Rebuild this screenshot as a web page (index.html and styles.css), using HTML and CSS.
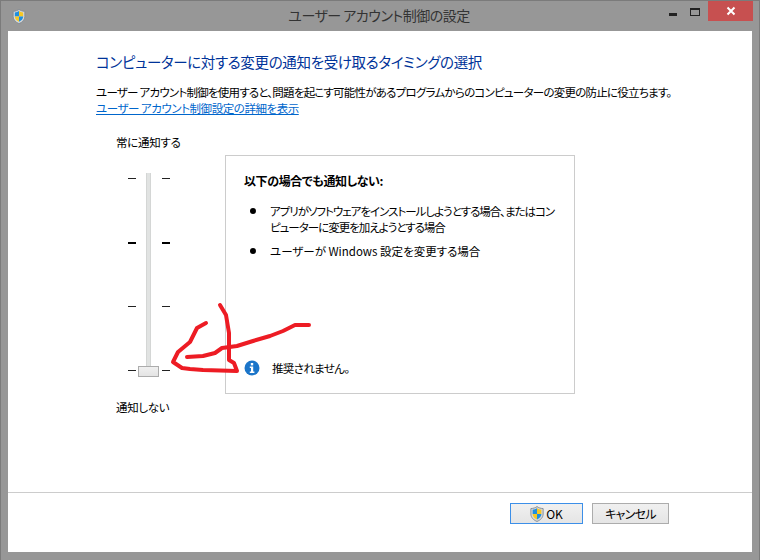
FILE: index.html
```html
<!DOCTYPE html>
<html lang="ja">
<head>
    <meta charset="UTF-8">
    <title>ユーザー アカウント制御の設定</title>
    <link rel="stylesheet" href="styles.css">
</head>
<body>
    <svg class="defs" width="0" height="0">
        <symbol id="shield" viewBox="0 0 16 18">
            <path d="M8 .5C6 2 4 2.6 1 2.8V9c0 4 3 7 7 8.5 4-1.500 7-4.500 7-8.500V2.800C12 2.600 10 2 8 .5z" fill="#d8d8d8" stroke="#7d8790"/>
            <path d="M8 2.500C6.500 3.500 5 4 3 4.200V9h5z" fill="#1f8fe0"/>
            <path d="M8 2.500V9h5V4.200C11 4 9.500 3.500 8 2.500z" fill="#f7c823"/>
            <path d="M3 9c0 3 2.200 5 5 6.300V9z" fill="#f7c823"/>
            <path d="M13 9c0 3-2.200 5-5 6.300V9z" fill="#1f8fe0"/>
        </symbol>
    </svg>

    <div class="window">
        <div class="titlebar">
            <svg class="title-icon"><use href="#shield"/></svg>
            <div class="title">ユーザー アカウント制御の設定</div>
            <div class="controls">
                <span class="ctl-min"></span>
                <span class="ctl-max"></span>
                <span class="ctl-close">
                    <svg width="10" height="10" viewBox="0 0 10 10"><path d="M1.500 1.500l7 7M8.500 1.500l-7 7" stroke="#fff" stroke-width="2"/></svg>
                </span>
            </div>
        </div>

        <div class="client">
            <div class="content">
                <h1 class="heading">コンピューターに対する変更の通知を受け取るタイミングの選択</h1>
                <p class="intro">ユーザー アカウント制御を使用すると、問題を起こす可能性があるプログラムからのコンピューターの変更の防止に役立ちます。</p>
                <a class="more" href="#">ユーザー アカウント制御設定の詳細を表示</a>

                <div class="settings">
                    <div class="slider-col">
                        <div class="slider-label">常に通知する</div>
                        <div class="slider">
                            <div class="tick-row"><span class="tick"></span><span class="tick"></span></div>
                            <div class="tick-row bold"><span class="tick"></span><span class="tick"></span></div>
                            <div class="tick-row"><span class="tick"></span><span class="tick"></span></div>
                            <div class="tick-row"><span class="tick"></span><span class="tick"></span></div>
                            <div class="track"></div>
                            <div class="thumb"></div>
                        </div>
                        <div class="slider-label bottom">通知しない</div>
                    </div>

                    <div class="panel">
                        <div>
                            <div class="panel-title">以下の場合でも通知しない:</div>
                            <ul class="reasons">
                                <li><span class="tight">アプリがソフトウェアをインストールしようとする場合、またはコン<br>ピューターに変更を加えようとする場合</span></li>
                                <li><span>ユーザーが Windows 設定を変更する場合</span></li>
                            </ul>
                        </div>
                        <div class="notice">
                            <svg width="16" height="16" viewBox="0 0 16 16">
                                <circle cx="8" cy="8" r="7.500" fill="#1b75c9"/>
                                <rect x="6.800" y="3" width="2.400" height="2.400" fill="#fff"/>
                                <path d="M5.800 6.600h3.400v5h1.200v1.400H5.800v-1.400h1.200V8H5.800z" fill="#fff"/>
                            </svg>
                            <span>推奨されません。</span>
                        </div>
                    </div>
                </div>
            </div>

            <div class="footer">
                <button class="btn btn-ok" type="button"><svg class="btn-icon"><use href="#shield"/></svg>OK</button>
                <button class="btn btn-cancel" type="button">キャンセル</button>
            </div>

            <!-- red marker drawn on top of the screenshot -->
            <svg class="scribble" width="744" height="521" viewBox="8 31 744 521">
                <path d="M206 323L197 328L190 342L178 352L173 362L182 368L190 369L203 370L237 371L234 363L229 360L229 333L226 315L220 305"/>
                <path d="M187 357L203 356L215 353L222 348L237 346L253 341L270 336L283 331L295 325L309 325"/>
            </svg>
        </div>
    </div>
</body>
</html>
```

FILE: styles.css
```css
* {
    box-sizing: border-box;
}

body {
    margin: 0;
    font-family: "Noto Sans CJK JP", "Noto Sans", sans-serif;
    font-size: 11.5px;
    color: #000;
    font-feature-settings: "palt";
}

.defs {
    display: block;
    height: 0;
}

.window {
    width: 760px;
    height: 560px;
    display: flex;
    flex-direction: column;
    background-color: #979797;
    border: 1px solid #7b7b7b;
    border-bottom: 0;
}

.titlebar {
    height: 30px;
    display: flex;
    position: relative;
    flex-shrink: 0;
}

.title-icon {
    width: 14px;
    height: 15px;
    margin: 8px 0 0 11px;
}

.title {
    flex: 1;
    text-align: center;
    font-size: 14px;
    letter-spacing: -0.5px;
    line-height: 29px;
    color: #333;
    padding-left: 63px;
}

.controls {
    display: flex;
    height: 20px;
    align-items: flex-start;
}

.ctl-min {
    width: 8px;
    height: 3px;
    margin: 12px 13px 0 0;
    background-color: #222;
}

.ctl-max {
    width: 10px;
    height: 8px;
    margin: 7px 8px 0 0;
    border: 1px solid #222;
    border-top-width: 2px;
}

.ctl-close {
    width: 45px;
    height: 20px;
    margin-right: 6px;
    background-color: #c75050;
    display: flex;
    align-items: center;
    justify-content: center;
}

.client {
    flex: 1;
    position: relative;
    margin: 0 7px 8px;
    background-color: #fff;
    display: flex;
    flex-direction: column;
}

.content {
    flex: 1;
    padding: 19px 0 0 88px;
}

.heading {
    margin: 0;
    font-size: 14.5px;
    letter-spacing: -0.35px;
    font-weight: 400;
    line-height: 24px;
    color: #003399;
}

.intro {
    margin: 10px 0 0;
    line-height: 16px;
    letter-spacing: -0.76px;
    white-space: nowrap;
}

.more {
    display: block;
    line-height: 16px;
    letter-spacing: -0.45px;
    color: #0066cc;
    text-decoration: underline;
}

.settings {
    display: flex;
    margin-top: 18px;
    align-items: flex-start;
}

.slider-col {
    width: 109px;
    margin-left: 20px;
}

.slider-label {
    line-height: 16px;
    letter-spacing: -0.3px;
}

.slider-label.bottom {
    margin-top: 4px;
}

.slider {
    position: relative;
    width: 60px;
    height: 222px;
    margin-top: 23px;
    display: flex;
    flex-direction: column;
    gap: 63px;
    padding-top: 5px;
}

.tick-row {
    height: 1px;
    display: flex;
    gap: 26px;
    padding-left: 12px;
    align-items: flex-start;
}

.tick {
    width: 8px;
    height: 1px;
    background-color: #222;
}

.tick-row.bold .tick {
    height: 2px;
    background-color: #000;
}

.track {
    position: absolute;
    left: 30px;
    top: 0;
    width: 5px;
    height: 204px;
    background-color: #e1e3e2;
    border-left: 1px solid #d4d6d5;
    border-right: 1px solid #d4d6d5;
}

.thumb {
    position: absolute;
    left: 22px;
    top: 193px;
    width: 21px;
    height: 11px;
    background: linear-gradient(#f0f0f0, #e4e4e4);
    border: 1px solid #acacac;
}

.panel {
    width: 350px;
    height: 239px;
    border: 1px solid #cccccc;
    padding: 16px 18px 17px;
    display: flex;
    flex-direction: column;
    justify-content: space-between;
    margin-top: 21px;
}

.panel-title {
    font-weight: 700;
    font-size: 12px;
    letter-spacing: -0.4px;
    line-height: 18px;
}

.reasons {
    margin: 13px 0 0;
    padding: 0 0 0 6px;
    line-height: 16px;
    list-style: none;
}

.reasons li {
    display: flex;
    gap: 14px;
    margin-bottom: 8px;
    white-space: nowrap;
}

.reasons li::before {
    content: "";
    width: 6px;
    height: 6px;
    margin-top: 5px;
    border-radius: 50%;
    background-color: #000;
    flex-shrink: 0;
}

.tight {
    letter-spacing: -1px;
}

.notice {
    display: flex;
    align-items: center;
    gap: 12px;
    letter-spacing: -0.65px;
}

.footer {
    height: 60px;
    flex-shrink: 0;
    border-top: 1px solid #cccccc;
    display: flex;
    justify-content: flex-end;
    gap: 9px;
    padding: 10px 83px 0 0;
}

.btn {
    height: 21px;
    font-family: inherit;
    font-size: 12px;
    font-feature-settings: inherit;
    color: #000;
    background: linear-gradient(#f0f0f0, #e5e5e5);
    border: 1px solid #acacac;
    padding: 0;
    display: flex;
    align-items: center;
    justify-content: center;
}

.btn-ok {
    width: 73px;
    border-color: #3c8fe8;
}

.btn-cancel {
    width: 77px;
    letter-spacing: -0.7px;
}

.btn-icon {
    width: 14px;
    height: 16px;
    margin-right: 2px;
}

.scribble {
    position: absolute;
    left: 0;
    top: 0;
    pointer-events: none;
}

.scribble path {
    fill: none;
    stroke: #ed1c24;
    stroke-width: 4;
    stroke-linejoin: round;
    stroke-linecap: round;
}
```
